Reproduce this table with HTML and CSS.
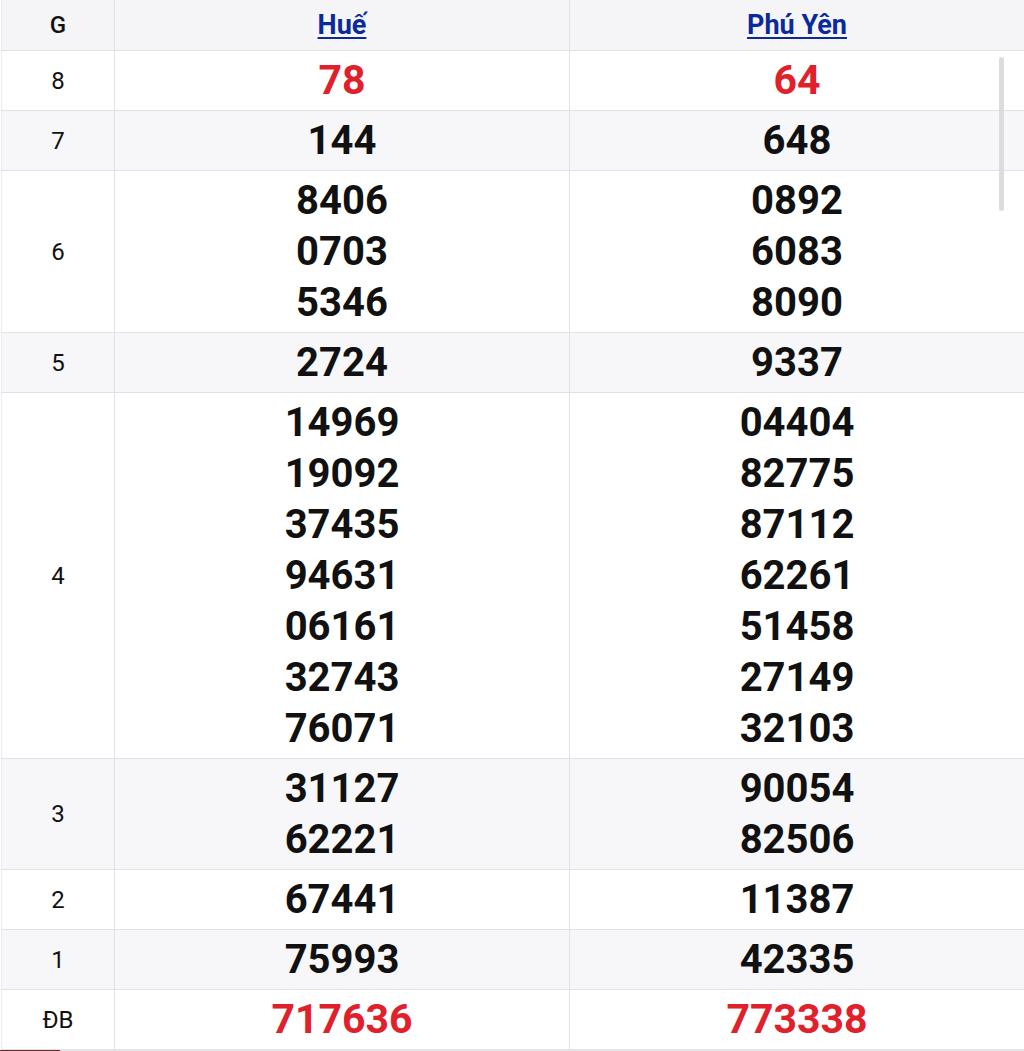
FILE: index.html
```html
<!DOCTYPE html>
<html lang="vi">
<head>
<meta charset="utf-8">
<title>Kết quả xổ số</title>
<link rel="stylesheet" href="styles.css">
</head>
<body>
<div class="wrap">
<table class="kq">
  <colgroup><col class="c-g"><col class="c-p"><col class="c-p"></colgroup>
  <thead>
    <tr class="head">
      <th class="lbl">G</th>
      <th><a href="#">Huế</a></th>
      <th><a href="#">Phú Yên</a></th>
    </tr>
  </thead>
  <tbody>
    <tr><td class="lbl">8</td><td class="num red"><div>78</div></td><td class="num red"><div>64</div></td></tr>
    <tr class="alt"><td class="lbl">7</td><td class="num"><div>144</div></td><td class="num"><div>648</div></td></tr>
    <tr><td class="lbl">6</td><td class="num"><div>8406</div><div>0703</div><div>5346</div></td><td class="num"><div>0892</div><div>6083</div><div>8090</div></td></tr>
    <tr class="alt"><td class="lbl">5</td><td class="num"><div>2724</div></td><td class="num"><div>9337</div></td></tr>
    <tr><td class="lbl">4</td><td class="num"><div>14969</div><div>19092</div><div>37435</div><div>94631</div><div>06161</div><div>32743</div><div>76071</div></td><td class="num"><div>04404</div><div>82775</div><div>87112</div><div>62261</div><div>51458</div><div>27149</div><div>32103</div></td></tr>
    <tr class="alt"><td class="lbl">3</td><td class="num"><div>31127</div><div>62221</div></td><td class="num"><div>90054</div><div>82506</div></td></tr>
    <tr><td class="lbl">2</td><td class="num"><div>67441</div></td><td class="num"><div>11387</div></td></tr>
    <tr class="alt"><td class="lbl">1</td><td class="num"><div>75993</div></td><td class="num"><div>42335</div></td></tr>
    <tr><td class="lbl">ĐB</td><td class="num red"><div>717636</div></td><td class="num red"><div>773338</div></td></tr>
  </tbody>
</table>
<div class="scrollbar"></div>
</div>
<div class="bottom"><span class="bar"></span></div>
</body>
</html>
```
FILE: styles.css
```css
html, body {
  margin: 0;
  padding: 0;
  background: #fff;
}
body {
  font-family: Roboto, "Noto Sans", "Liberation Sans", sans-serif;
  color: #111;
  width: 1024px;
}
.wrap {
  position: relative;
  padding-left: 1px;
}
.kq {
  border-collapse: collapse;
  width: 1021px;
  table-layout: fixed;
}
.c-g { width: 113px; }
.c-p { width: 455px; }
.kq th, .kq td {
  border: 1px solid #e1e2e7;
  text-align: center;
  vertical-align: middle;
  padding: 0;
}
.kq th:first-child, .kq td:first-child { border-left-color: #ececf0; }
.head th {
  height: 50px;
  background: #f5f5f7;
  border-top: none;
}
.head th.lbl {
  font-size: 24px;
  font-weight: 500;
  color: #111;
}
.head a {
  color: #0b2a9a;
  font-size: 27px;
  font-weight: 700;
  text-decoration: underline;
  text-underline-offset: 3px;
  text-decoration-thickness: 2px;
}
.kq td.lbl {
  font-size: 24px;
  color: #111;
}
.alt td { background: #f7f7f9; }
.num {
  padding: 4px 0 !important;
  font-size: 40px;
  font-weight: 700;
  line-height: 51px;
  color: #111;
}
.num.red { color: #e0202a; font-size: 41px; }
.scrollbar {
  position: absolute;
  left: 999px;
  top: 57px;
  width: 5px;
  height: 154px;
  border-radius: 3px;
  background: #dcdcdf;
}
.bottom {
  height: 2px;
  background: #e6e6ea;
  display: flex;
}
.bar {
  width: 60px;
  height: 2px;
  background: #6a2a2a;
}
```
